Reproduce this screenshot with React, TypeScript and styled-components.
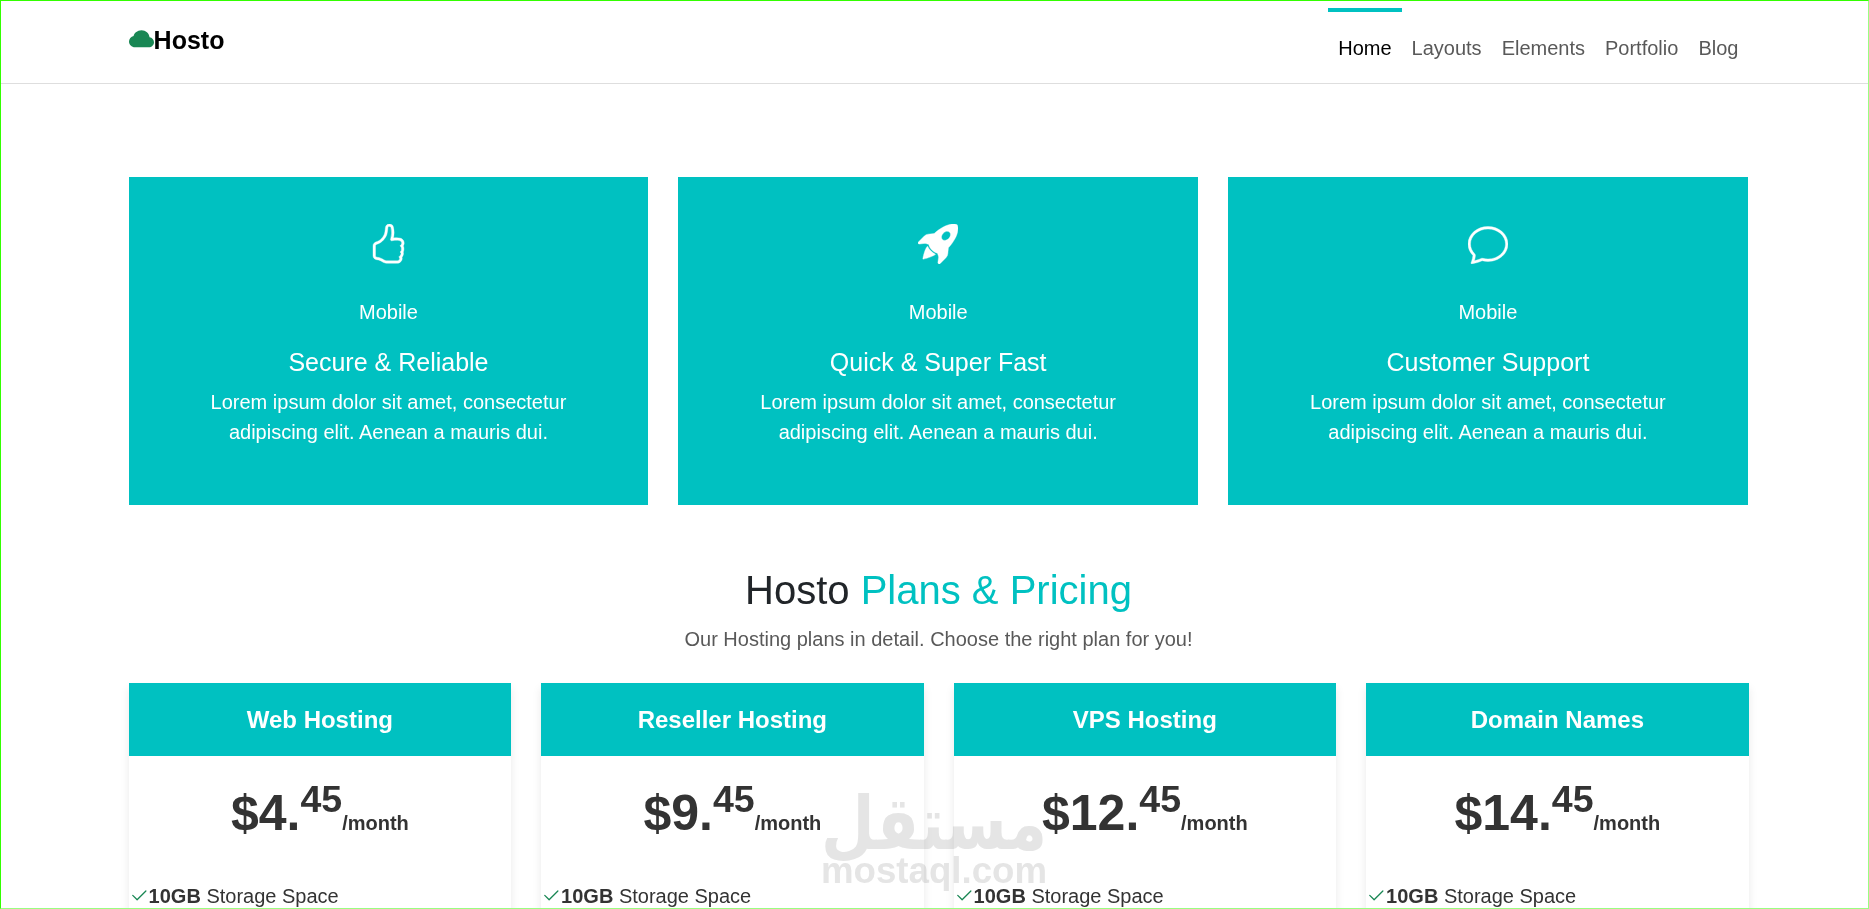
import React from "react";
import styled, { createGlobalStyle } from "styled-components";
import {
  BsChat,
  BsCheck2,
  BsCloudFill,
  BsHandThumbsUp,
  BsRocketTakeoffFill,
} from "react-icons/bs";
import type { IconType } from "react-icons";

const teal = "#00c1c1";

const GlobalStyle = createGlobalStyle`
  *, *::before, *::after { box-sizing: border-box; }
  body {
    margin: 0;
    background: #fff;
    color: #212529;
    font: 400 20px/30px Arial, "Liberation Sans", sans-serif;
  }
  svg { display: block; flex: none; }
`;

const Page = styled.div`
  position: relative;
  height: 909px;
  overflow: hidden;
`;

const Frame = styled.div`
  position: absolute;
  inset: 0;
  pointer-events: none;
  border: 1px solid;
  border-color: #33ff00 #99ff80 #99ff80 #33ff00;
`;

const Header = styled.header`
  display: flex;
  justify-content: space-between;
  align-items: flex-start;
  height: 84px;
  padding: 8px 120.6px 0 128.6px;
  border-bottom: 1px solid #dedede;
`;

const Brand = styled.a`
  display: flex;
  align-items: flex-start;
  margin-top: 14px;
  color: #000;
  font-size: 25px;
  font-weight: 700;
  line-height: 37px;

  svg {
    margin-top: 5px;
    color: #198754;
  }
`;

const Nav = styled.nav`
  display: flex;
`;

const NavLink = styled.a<{ $active?: boolean }>`
  padding: 21px 10px 0;
  border-top: 4px solid ${(p) => (p.$active ? teal : "transparent")};
  color: ${(p) => (p.$active ? "#000" : "#595959")};
`;

const Features = styled.section`
  display: grid;
  grid-template-columns: repeat(3, 1fr);
  gap: 30px;
  width: 1619.2px;
  margin: 93px 0 0 128.6px;
`;

const Feature = styled.article`
  display: flex;
  flex-direction: column;
  align-items: center;
  height: 328px;
  padding: 47px 60px 0;
  background: ${teal};
  color: #fff;
  text-align: center;
`;

const FeatureIcon = styled.span`
  height: 40px;
  font-size: 40px;

  svg { stroke-width: 0.15px; }
`;

const FeatureLabel = styled.p`
  margin: 33px 0 20px;
`;

const FeatureTitle = styled.h5`
  margin: 0 0 10px;
  font-size: 25px;
  font-weight: 400;
  line-height: 30px;
`;

const FeatureText = styled.p`
  width: 370px;
  margin: 0;
`;

const Intro = styled.section`
  width: 1620px;
  margin: 61px 0 0 128.5px;
  text-align: center;
`;

const Heading = styled.h2`
  margin: 0 0 10px;
  font-size: 40px;
  font-weight: 400;
  line-height: 48px;

  span { color: ${teal}; }
`;

const Subtitle = styled.p`
  margin: 0;
  color: #595959;
`;

const Plans = styled.section`
  display: grid;
  grid-template-columns: repeat(4, 1fr);
  gap: 30px;
  width: 1620px;
  margin: 29px 0 0 128.6px;
`;

const Plan = styled.article`
  height: 420px;
  background: #fff;
  box-shadow: 0 5px 9px rgba(0, 0, 0, 0.085);
  color: #333;
`;

const PlanTitle = styled.h3`
  margin: 0;
  background: ${teal};
  color: #fff;
  font-size: 24px;
  line-height: 73px;
  text-align: center;
`;

const Price = styled.div`
  height: 60px;
  margin-top: 27px;
  font-size: 50px;
  font-weight: 700;
  line-height: 60px;
  text-align: center;

  sup {
    font-size: 0.75em;
    line-height: 0;
    vertical-align: 0.49em;
  }
`;

const Period = styled.span`
  font-size: 20px;
  line-height: 0;
`;

const Perk = styled.div`
  display: flex;
  align-items: center;
  margin-top: 38px;
  white-space: pre;

  svg { color: #198754; }
`;

const Watermark = styled.div`
  position: absolute;
  left: 820px;
  top: 780px;
  width: 228px;
  height: 116px;
  mix-blend-mode: multiply;

  text {
    fill: #e5e5e5;
    font-weight: 700;
  }
`;

const links = ["Home", "Layouts", "Elements", "Portfolio", "Blog"];

const features: { icon: IconType; title: string }[] = [
  { icon: BsHandThumbsUp, title: "Secure & Reliable" },
  { icon: BsRocketTakeoffFill, title: "Quick & Super Fast" },
  { icon: BsChat, title: "Customer Support" },
];

const plans = [
  { name: "Web Hosting", price: "4" },
  { name: "Reseller Hosting", price: "9" },
  { name: "VPS Hosting", price: "12" },
  { name: "Domain Names", price: "14" },
];

export default function App() {
  return (
    <Page>
      <GlobalStyle />
      <Header>
        <Brand>
          <BsCloudFill size={25} />
          Hosto
        </Brand>
        <Nav>
          {links.map((link, i) => (
            <NavLink key={link} $active={i === 0}>
              {link}
            </NavLink>
          ))}
        </Nav>
      </Header>

      <Features>
        {features.map(({ icon: Icon, title }) => (
          <Feature key={title}>
            <FeatureIcon>
              <Icon />
            </FeatureIcon>
            <FeatureLabel>Mobile</FeatureLabel>
            <FeatureTitle>{title}</FeatureTitle>
            <FeatureText>
              Lorem ipsum dolor sit amet, consectetur adipiscing elit. Aenean a
              mauris dui.
            </FeatureText>
          </Feature>
        ))}
      </Features>

      <Intro>
        <Heading>
          Hosto <span>Plans &amp; Pricing</span>
        </Heading>
        <Subtitle>
          Our Hosting plans in detail. Choose the right plan for you!
        </Subtitle>
      </Intro>

      <Plans>
        {plans.map((plan) => (
          <Plan key={plan.name}>
            <PlanTitle>{plan.name}</PlanTitle>
            <Price>
              ${plan.price}.<sup>45</sup>
              <Period>/month</Period>
            </Price>
            <Perk>
              <BsCheck2 size={20} />
              <b>10GB</b> Storage Space
            </Perk>
          </Plan>
        ))}
      </Plans>

      <Watermark>
        <svg width="228" height="116" viewBox="0 0 228 116">
          <text
            x="1"
            y="69"
            fontFamily="'DejaVu Sans', sans-serif"
            fontSize="74"
            textLength="226"
            lengthAdjust="spacingAndGlyphs"
          >
            مستقل
          </text>
          <text
            x="1"
            y="103"
            fontFamily="'Liberation Sans', Arial, sans-serif"
            fontSize="36"
            textLength="226"
            lengthAdjust="spacingAndGlyphs"
          >
            mostaql.com
          </text>
        </svg>
      </Watermark>
      <Frame />
    </Page>
  );
}
